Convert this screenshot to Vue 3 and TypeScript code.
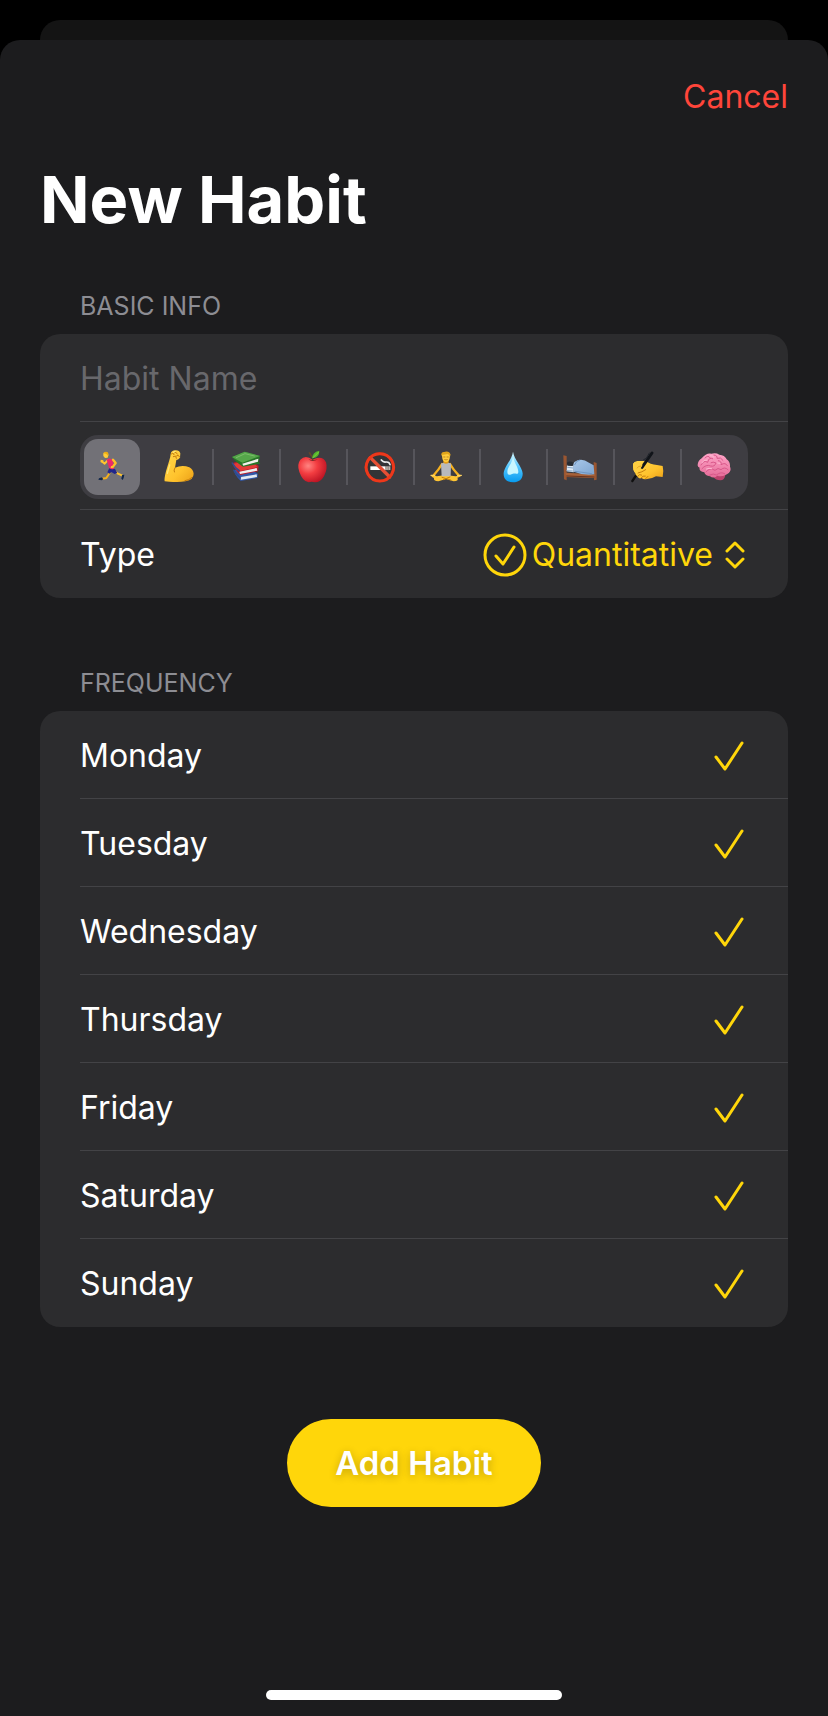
<script setup lang="ts">
import { ref } from 'vue'

interface Shape {
  d: string
  fill?: string
  stroke?: string
  width?: number
}

interface HabitIcon {
  name: string
  shapes: Shape[]
}

const icons: HabitIcon[] = [
  {
    name: 'Running',
    shapes: [
      { d: 'M48 60 L42 72 L34 84 L21 86', stroke: '#f5b01c', width: 6 },
      { d: 'M56 62 L69 71 L82 77', stroke: '#ffc52e', width: 6 },
      { d: 'M43 54 L60 57 L67 69 L59 72 L49 66 L44 71 L37 67Z', fill: '#20268c' },
      { d: 'M21 82 L25 88 L20 91 L10 89 L12 85Z M81 75 L88 74 L86 84 L83 90 L79 86Z', fill: '#12284d' },
      { d: 'M38 31 L29 41 L20 34', stroke: '#ffc52e', width: 6 },
      { d: 'M35 29 Q44 21 53 30 L57 56 Q50 60 42 54 L39 43Z', fill: '#ee2867' },
      { d: 'M54 29 L62 39 L54 50', stroke: '#ffbd27', width: 7 },
      { d: 'M17 29 L25 31 L25 38 L17 37Z M48 48 L54 49 L53 55 L47 54Z', fill: '#ffc52e' },
      { d: 'M25 10 Q30 5 38 8 Q43 15 38 23 L30 24 L25 18Z', fill: '#ffcd38' },
      { d: 'M24 10 Q29 3 37 6 Q42 9 40 19 L37 15 L33 11Z', fill: '#ecac13' },
    ],
  },
  {
    name: 'Strength',
    shapes: [
      { d: 'M26 12 Q28 1 40 1 Q52 0 55 10 L54 23 Q48 30 43 30 L39 53 Q61 44 82 52 Q94 59 95 71 Q95 89 71 94 Q50 98 22 95 L8 94 Q6 88 12 64 L22 31 Q25 23 26 12Z', fill: 'url(#skin)' },
      { d: 'M27 13 Q34 5 36 14 M36 8 Q43 3 46 12 M44 17 Q50 12 53 21 M34 20 L41 18 L43 25 M39 53 Q34 61 37 66 M69 92 Q81 91 89 83', stroke: '#c57d0b', width: 3 },
      { d: 'M34 7 L39 4 M16 70 L23 45', stroke: '#ffe779', width: 4 },
    ],
  },
  {
    name: 'Reading',
    shapes: [
      { d: 'M15 61 L58 51 L87 72 L85 84 L35 93 Q16 75 15 61Z', fill: '#3157a8' },
      { d: 'M31 82 L83 73 L84 81 L36 89Z', fill: '#e2eaf2' },
      { d: 'M11 39 L62 24 L89 48 L87 64 L34 75 Q14 56 11 39Z', fill: '#b91e2c' },
      { d: 'M31 65 L83 54 L85 62 L33 72Z', fill: '#efefef' },
      { d: 'M13 42 L63 28 L86 51 L31 64Z', fill: '#e33a37' },
      { d: 'M9 21 L47 5 L93 18 L92 22 L89 35 L94 41 L42 50 Q18 35 9 21Z', fill: '#267527' },
      { d: 'M40 41 L88 26 L87 35 L43 47Z', fill: '#f1f0e9' },
      { d: 'M9 21 L47 5 L93 18 L40 38Z', fill: '#55a64a' },
      { d: 'M10 39 Q17 54 31 62 M15 61 Q22 75 34 84', stroke: '#304c8e', width: 5 },
      { d: 'M22 23 L48 11 L76 18', stroke: '#7abd69', width: 3 },
    ],
  },
  {
    name: 'Healthy eating',
    shapes: [
      { d: 'M50 29 Q28 13 13 29 Q2 43 10 66 Q20 95 38 97 Q47 94 56 97 Q73 98 84 79 Q96 55 90 37 Q79 15 50 29Z', fill: 'url(#apple)' },
      { d: 'M37 28 Q49 38 66 28 Q51 32 37 28Z', fill: '#931b24' },
      { d: 'M49 33 Q47 18 37 8 L42 6 Q51 17 52 33Z', fill: '#68452b' },
      { d: 'M49 25 Q48 7 70 2 Q71 21 49 25Z', fill: '#55b72b' },
      { d: 'M51 23 L67 7', stroke: '#94d747', width: 2 },
    ],
  },
  {
    name: 'No smoking',
    shapes: [
      { d: 'M51 7 A45 45 0 1 1 50 7Z', fill: '#b91c0c' },
      { d: 'M51 14 A38 38 0 1 1 50 14Z', fill: '#333436' },
      { d: 'M22 49 H67 V60 H22Z', fill: '#ffffff' },
      { d: 'M67 49 H82 V60 H67Z', fill: '#c8bdb4' },
      { d: 'M72 50 V60 M77 50 V60', stroke: '#77736e', width: 2 },
      { d: 'M55 30 Q61 38 69 36 Q79 35 81 44', stroke: '#eeeeee', width: 5 },
      { d: 'M22 23 L80 81', stroke: '#e54f35', width: 10 },
      { d: 'M51 11 A41 41 0 1 1 50 11Z', stroke: '#ed381b', width: 9 },
    ],
  },
  {
    name: 'Meditation',
    shapes: [
      { d: 'M39 42 Q30 58 14 76 M63 42 Q72 58 89 76', stroke: '#f6b11f', width: 7 },
      { d: 'M43 29 H59 V42 H43Z', fill: '#e59c16' },
      { d: 'M8 75 L24 79 L49 75 L80 79 L96 75 Q100 79 85 83 Q91 92 74 94 L51 87 L28 94 Q12 93 15 84 Q4 80 8 75Z', fill: '#ffc533' },
      { d: 'M36 41 L43 38 Q51 44 59 38 L66 41 L65 79 H38Z', fill: '#b8b9bd' },
      { d: 'M39 82 L65 90 M63 81 L43 89', stroke: '#c8800b', width: 3 },
      { d: 'M39 17 Q38 6 51 6 Q64 6 63 17 Q62 36 51 36 Q40 36 39 17Z', fill: '#ffcd3d' },
      { d: 'M37 19 Q35 6 45 6 Q54 2 62 8 Q67 13 63 20 Q61 13 55 12 Q45 15 39 14Z', fill: '#e0a51c' },
      { d: 'M44 21 H48 M54 21 H58 M47 29 Q51 31 55 29', stroke: '#a86d12', width: 2 },
      { d: 'M6 76 H17 M86 76 H97', stroke: '#ffd462', width: 4 },
    ],
  },
  {
    name: 'Hydration',
    shapes: [
      { d: 'M51 5 C49 27 24 51 23 70 C22 87 34 97 51 97 C69 97 81 87 80 70 C79 52 54 27 51 5Z', fill: 'url(#water)' },
      { d: 'M51 17 C49 43 34 49 34 66 C35 79 43 73 51 71 C61 70 67 74 67 65 C66 47 55 42 51 17Z', fill: '#c8f7ff' },
    ],
  },
  {
    name: 'Sleep',
    shapes: [
      { d: 'M1 16 L11 18 V91 L3 88Z M92 36 L101 39 V89 L93 91Z', fill: '#9a5631' },
      { d: 'M7 68 L96 73 L94 84 L9 81Z', fill: '#a76138' },
      { d: 'M11 78 L93 81', stroke: '#68331e', width: 3 },
      { d: 'M12 44 L32 47 V67 L11 64Z', fill: '#dce8f4' },
      { d: 'M12 38 Q20 31 31 38 L29 48 L13 47Z', fill: '#272b32' },
      { d: 'M14 52 L30 54 M12 62 L28 63', stroke: '#87a7c8', width: 3 },
      { d: 'M34 36 Q55 22 78 38 L92 46 L94 73 Q61 77 33 65 Q27 48 34 36Z', fill: 'url(#blanket)' },
      { d: 'M35 44 Q40 31 50 30 M37 64 L86 71', stroke: '#6f96c2', width: 3 },
    ],
  },
  {
    name: 'Writing',
    shapes: [
      { d: 'M28 62 L7 93', stroke: '#101010', width: 7 },
      { d: 'M9 42 Q12 34 22 33 L48 33 Q60 43 81 45 L98 48 Q102 64 98 81 L78 79 Q65 87 51 87 Q41 90 35 84 Q26 88 22 79 Q16 78 16 70 Q8 60 9 42Z', fill: 'url(#skin)' },
      { d: 'M24 69 Q36 67 47 59 M23 79 Q28 70 35 75 M34 83 Q38 76 46 78 M47 86 L54 79', stroke: '#c8800e', width: 3 },
      { d: 'M66 9 L36 52', stroke: '#111419', width: 9 },
      { d: 'M58 9 L49 25 L41 29', stroke: '#20242b', width: 3 },
      { d: 'M9 42 Q12 36 20 36 L32 38 Q41 42 34 52 L21 70 Q14 70 10 59Z', fill: '#ffcf40' },
      { d: 'M21 54 Q26 47 33 48', stroke: '#d9941a', width: 2 },
    ],
  },
  {
    name: 'Mindfulness',
    shapes: [
      { d: 'M58 74 Q72 70 85 76 Q83 91 70 91 Q56 91 50 82Z', fill: '#bd416d' },
      { d: 'M2 44 Q3 32 14 25 Q28 8 43 11 Q57 7 67 14 Q83 15 89 28 Q100 36 99 50 Q105 64 91 72 Q76 82 61 77 Q50 87 39 79 Q24 77 22 67 Q5 65 8 53 Q1 50 2 44Z', fill: 'url(#brain)' },
      { d: 'M12 45 Q20 29 32 37 Q36 20 47 26 M24 24 Q33 14 39 23 M51 15 Q62 16 60 25 Q72 20 78 31 M15 56 Q27 42 41 48 Q53 51 57 39 Q48 34 42 38 M64 32 Q75 34 72 44 Q86 36 91 47 M27 66 Q38 51 54 61 Q63 51 72 59 Q83 49 93 59 M38 75 Q50 69 58 75 Q72 64 83 71', stroke: '#d9588a', width: 3 },
      { d: 'M14 39 Q20 28 30 30 M40 17 Q50 16 51 22 M62 39 L69 40 M28 57 Q36 53 44 56', stroke: '#ffb8d2', width: 3 },
    ],
  },
]

const selectedIcon = ref('Running')
const habitName = ref('')
const habitType = ref('Quantitative')
const days = ref(
  ['Monday', 'Tuesday', 'Wednesday', 'Thursday', 'Friday', 'Saturday', 'Sunday'].map((name) => ({
    name,
    active: true,
  })),
)
</script>

<template>
  <div class="screen">
    <svg class="defs" aria-hidden="true">
      <defs>
        <linearGradient id="skin" x1="0" y1="0" x2="1" y2="1">
          <stop offset="0" stop-color="#ffd84b" />
          <stop offset=".6" stop-color="#ffc32d" />
          <stop offset="1" stop-color="#eba018" />
        </linearGradient>
        <radialGradient id="apple" cx=".35" cy=".35" r=".7">
          <stop offset="0" stop-color="#ff8582" />
          <stop offset=".45" stop-color="#f33d41" />
          <stop offset="1" stop-color="#bd1424" />
        </radialGradient>
        <linearGradient id="water" x1="0" y1="0" x2="0" y2="1">
          <stop offset="0" stop-color="#dcfaff" />
          <stop offset=".5" stop-color="#52c6ff" />
          <stop offset="1" stop-color="#079bef" />
        </linearGradient>
        <linearGradient id="blanket" x1="0" y1="0" x2="1" y2="1">
          <stop offset="0" stop-color="#a8c7e9" />
          <stop offset="1" stop-color="#7ea5d0" />
        </linearGradient>
        <linearGradient id="brain" x1="0" y1="0" x2="0" y2="1">
          <stop offset="0" stop-color="#ffa5c8" />
          <stop offset="1" stop-color="#e56b98" />
        </linearGradient>
      </defs>
    </svg>
    <div class="back-sheet"></div>
    <main class="sheet">
      <header class="toolbar">
        <button type="button" class="cancel">Cancel</button>
      </header>
      <h1 class="title">New Habit</h1>

      <form class="form" @submit.prevent>
        <section class="group">
          <h2 class="caption">BASIC INFO</h2>
          <div class="card">
            <div class="row">
              <input v-model="habitName" class="name" type="text" placeholder="Habit Name" aria-label="Habit Name" />
            </div>
            <div class="row">
              <div class="segments" role="radiogroup" aria-label="Icon">
                <label v-for="icon in icons" :key="icon.name" class="segment">
                  <input v-model="selectedIcon" type="radio" name="icon" :value="icon.name" :aria-label="icon.name" />
                  <svg class="emoji" viewBox="0 0 102 102" aria-hidden="true">
                    <path
                      v-for="(shape, i) in icon.shapes"
                      :key="i"
                      :d="shape.d"
                      :fill="shape.fill ?? 'none'"
                      :stroke="shape.stroke ?? 'none'"
                      :stroke-width="shape.width ?? 0"
                      stroke-linecap="round"
                      stroke-linejoin="round"
                    />
                  </svg>
                </label>
              </div>
            </div>
            <div class="row">
              <label for="habit-type">Type</label>
              <div class="picker">
                <svg class="badge" viewBox="0 0 44 44" aria-hidden="true">
                  <circle cx="22" cy="22" r="20" />
                  <path d="M13 23 L20 31 L31 14" />
                </svg>
                <select id="habit-type" v-model="habitType" class="type">
                  <option>Quantitative</option>
                </select>
                <svg class="chevrons" viewBox="0 0 20 28" aria-hidden="true">
                  <path d="M2 10 L10 2 L18 10 M2 18 L10 26 L18 18" />
                </svg>
              </div>
            </div>
          </div>
        </section>

        <section class="group">
          <h2 class="caption">FREQUENCY</h2>
          <div class="card">
            <label v-for="day in days" :key="day.name" class="row">
              <span>{{ day.name }}</span>
              <span class="tick">
                <input v-model="day.active" type="checkbox" />
                <svg v-if="day.active" viewBox="0 0 30 30" aria-hidden="true">
                  <path d="M2 16 L11 28 L28 2" />
                </svg>
              </span>
            </label>
          </div>
        </section>

        <button type="submit" class="add">Add Habit</button>
      </form>
      <div class="home-indicator"></div>
    </main>
  </div>
</template>

<style>
body {
  background: #000000;
}
</style>

<style scoped>
.screen {
  box-sizing: border-box;
  display: flex;
  flex-direction: column;
  min-height: 100vh;
  padding-top: 20px;
  background: #000000;
  color: #ffffff;
  font-family: Inter, "Liberation Sans", sans-serif;
  font-size: 32px;
  line-height: 40px;
}

.defs {
  position: absolute;
  width: 0;
  height: 0;
}

.back-sheet {
  height: 20px;
  margin: 0 40px;
  border-radius: 20px 20px 0 0;
  background: #141414;
}

.sheet {
  display: flex;
  flex: 1;
  flex-direction: column;
  padding: 37px 40px 16px;
  border-radius: 20px 20px 0 0;
  background: #1c1c1e;
}

button,
input,
select {
  margin: 0;
  padding: 0;
  border: 0;
  background: none;
  color: inherit;
  font: inherit;
}

.toolbar {
  display: flex;
  justify-content: flex-end;
}

.cancel {
  color: #ff453a;
}

.title {
  margin: 43px 0 0;
  font-size: 65px;
  font-weight: 700;
  line-height: 80px;
}

.form {
  display: flex;
  flex-direction: column;
}

.group {
  margin-top: 50px;
}

.group + .group {
  margin-top: 69px;
}

.caption {
  margin: 0 0 12px;
  padding-left: 40px;
  color: #8d8d93;
  font-size: 25px;
  font-weight: 400;
  line-height: 32px;
}

.card {
  padding-left: 40px;
  border-radius: 20px;
  background: #2c2c2e;
}

.row {
  box-sizing: border-box;
  display: flex;
  align-items: center;
  justify-content: space-between;
  height: 88px;
  padding: 2px 40px 0 0;
  border-bottom: 1px solid #434346;
}

.row:last-child {
  border-bottom: 0;
}

.name {
  width: 100%;
  outline: 0;
}

.name::placeholder {
  color: #68686c;
  opacity: 1;
}

.segments {
  box-sizing: border-box;
  display: flex;
  flex: 1;
  gap: 11px;
  height: 64px;
  padding: 4px 6px 4px 4px;
  border-radius: 18px;
  background: #3e3d42;
}

.segment {
  position: relative;
  display: grid;
  flex: 1;
  place-items: center;
}

.segment > * {
  grid-area: 1 / 1;
}

.segment input {
  width: 100%;
  height: 100%;
  border-radius: 14px;
  appearance: none;
}

.segment input:checked {
  background: #727177;
}

.segment:nth-child(n + 3)::before {
  position: absolute;
  top: 10px;
  bottom: 10px;
  left: -6px;
  width: 2px;
  background: #56555b;
  content: "";
}

.emoji {
  width: 34px;
  height: 34px;
  pointer-events: none;
}

.picker {
  display: flex;
  align-items: center;
  color: #ffd60a;
}

.badge,
.chevrons,
.tick svg {
  fill: none;
  stroke: #ffd60a;
  stroke-width: 3;
  stroke-linecap: round;
  stroke-linejoin: round;
}

.badge {
  width: 44px;
  height: 44px;
  margin-right: 5px;
}

.type {
  appearance: none;
  field-sizing: content;
}

.chevrons {
  width: 20px;
  height: 28px;
  margin: 0 3px 0 12px;
}

.tick {
  display: grid;
  width: 30px;
  height: 30px;
  margin-right: 4px;
}

.tick > * {
  grid-area: 1 / 1;
  width: 100%;
  height: 100%;
}

.tick input {
  appearance: none;
}

.add {
  align-self: center;
  margin-top: 92px;
  padding: 24px 48px;
  border-radius: 44px;
  background: #ffd60a;
  color: #ffffff;
  font-size: 33px;
  font-weight: 600;
  text-shadow: 0 2px 8px rgb(0 0 0 / 24%);
}

.home-indicator {
  align-self: center;
  width: 296px;
  height: 10px;
  margin-top: auto;
  border-radius: 5px;
  background: #ffffff;
}
</style>
